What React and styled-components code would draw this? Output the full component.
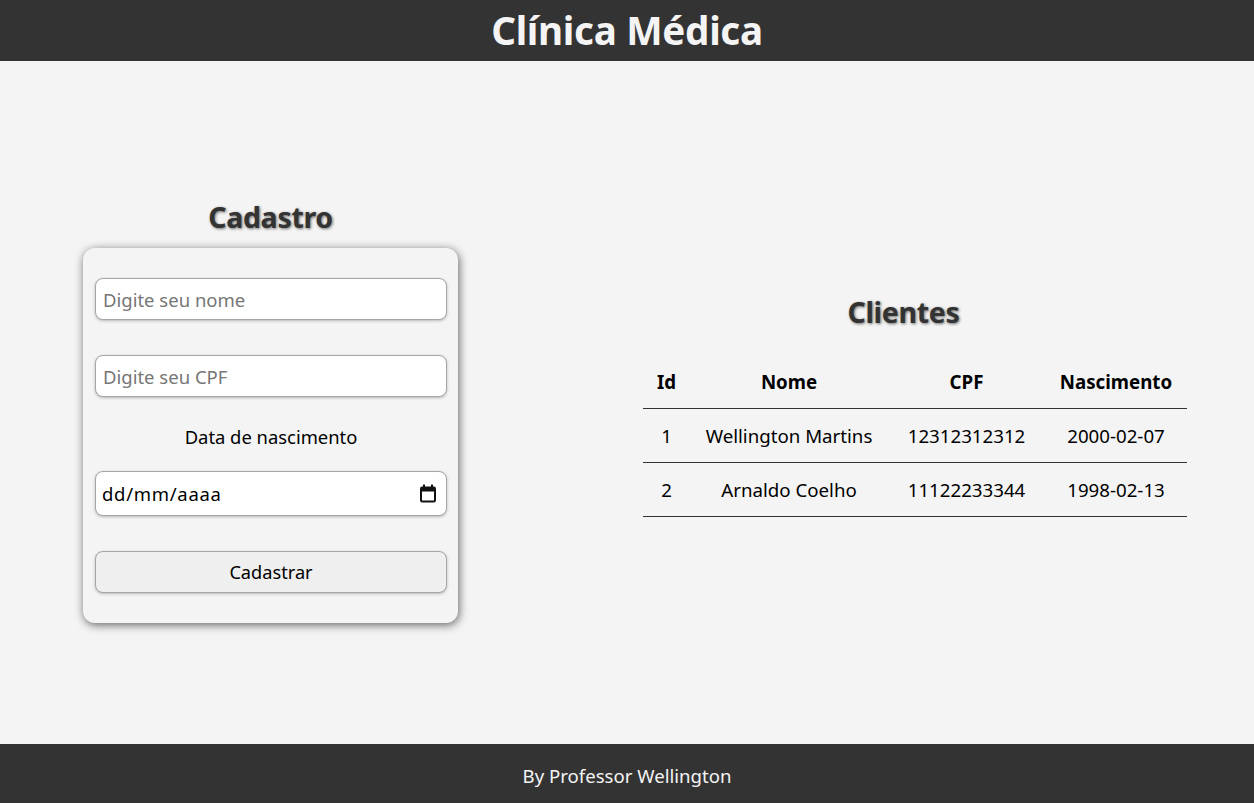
import React from "react";
import styled, { createGlobalStyle } from "styled-components";

const Global = createGlobalStyle`
  * { box-sizing: border-box; }
  html, body { margin: 0; padding: 0; }
  body {
    background: #f4f4f4;
    font-family: "Segoe UI", "Noto Sans", "Open Sans", sans-serif;
    color: #000;
  }
`;

const Page = styled.div`
  min-height: 100vh;
  display: flex;
  flex-direction: column;
`;

const Header = styled.header`
  height: 61px;
  background: #333333;
  display: flex;
  align-items: center;
  justify-content: center;
`;

const Title = styled.h1`
  margin: 0;
  color: #f4f4f4;
  font-size: 38.6px;
  font-weight: 700;
  line-height: 1;
  letter-spacing: -0.3px;
`;

const Main = styled.main`
  flex: 1;
  display: flex;
  align-items: center;
  padding-left: 83px;
`;

const Column = styled.section`
  display: flex;
  flex-direction: column;
  align-items: center;
  width: ${(p) => p.$width}px;
  margin-left: ${(p) => p.$offset || 0}px;
  margin-top: ${(p) => p.$top || 0}px;
`;

const Heading = styled.h2`
  margin: 0 ${(p) => p.$shift || 0}px ${(p) => p.$gap}px 0;
  font-size: 28.5px;
  line-height: 37px;
  font-weight: 700;
  color: #333333;
  text-shadow: 1px 1px 3px rgba(0, 0, 0, 0.55);
  letter-spacing: -0.3px;
`;

const Card = styled.form`
  width: 375px;
  padding: 30px 11px 30px 12px;
  background: #f4f4f4;
  border-radius: 12px;
  box-shadow: 1px 2px 10px rgba(0, 0, 0, 0.6);
  display: flex;
  flex-direction: column;
`;

const Field = styled.input`
  width: 100%;
  height: ${(p) => p.$h || 42}px;
  margin-bottom: ${(p) => p.$mb || 0}px;
  padding: 0 7px;
  border: 1px solid #a6a6a6;
  border-radius: 8px;
  background: #ffffff;
  box-shadow: 0 1px 3px rgba(0, 0, 0, 0.25);
  font-family: inherit;
  font-size: 18.5px;
  color: #000;
  outline: none;
  &::placeholder {
    color: #767676;
  }
`;

const DateWrap = styled.div`
  position: relative;
  margin-bottom: 35px;
`;

const DateField = styled(Field)`
  letter-spacing: 0.7px;
  font-size: 18.5px;
  padding-left: 6px;
  &::placeholder {
    color: #000;
  }
`;

const CalendarIcon = styled.svg`
  position: absolute;
  right: 10px;
  top: 13px;
  width: 18px;
  height: 19px;
  pointer-events: none;
`;

const Label = styled.label`
  display: block;
  text-align: center;
  font-size: 18.4px;
  line-height: 22px;
  margin-bottom: 23px;
`;

const Button = styled.button`
  width: 100%;
  height: 42px;
  border: 1px solid #a6a6a6;
  border-radius: 8px;
  background: #efefef;
  box-shadow: 0 1px 3px rgba(0, 0, 0, 0.25);
  font-family: inherit;
  font-size: 18.2px;
  color: #000;
  cursor: pointer;
`;

const Table = styled.table`
  width: 544px;
  border-collapse: collapse;
  font-size: 18.7px;
`;

const Th = styled.th`
  width: ${(p) => p.$w}px;
  height: 54px;
  padding: 0;
  text-align: center;
  font-weight: 700;
  border-bottom: 1px solid #333333;
`;

const Td = styled.td`
  height: 54px;
  padding: 0;
  text-align: center;
  border-bottom: 1px solid #333333;
`;

const Footer = styled.footer`
  height: 59px;
  background: #333333;
  color: #f4f4f4;
  display: flex;
  align-items: center;
  justify-content: center;
  font-size: 18.6px;
  padding-top: 4px;
`;

const clientes = [
  { id: 1, nome: "Wellington Martins", cpf: "12312312312", nasc: "2000-02-07" },
  { id: 2, nome: "Arnaldo Coelho", cpf: "11122233344", nasc: "1998-02-13" },
];

export default function App() {
  return (
    <Page>
      <Global />
      <Header>
        <Title>Clínica Médica</Title>
      </Header>
      <Main>
        <Column $width={375} $top={17}>
          <Heading $gap={12}>Cadastro</Heading>
          <Card onSubmit={(e) => e.preventDefault()}>
            <Field placeholder="Digite seu nome" $mb={35} />
            <Field placeholder="Digite seu CPF" $mb={29} />
            <Label>Data de nascimento</Label>
            <DateWrap>
              <DateField placeholder="dd/mm/aaaa" $h={45} />
              <CalendarIcon viewBox="0 0 18 19" fill="none">
                <rect x="2" y="3.5" width="14" height="14" rx="1.2" stroke="#111" strokeWidth="2" />
                <rect x="2" y="3.5" width="14" height="4" fill="#111" />
                <rect x="4" y="0.5" width="2" height="4" fill="#111" />
                <rect x="12" y="0.5" width="2" height="4" fill="#111" />
              </CalendarIcon>
            </DateWrap>
            <Button type="submit">Cadastrar</Button>
          </Card>
        </Column>
        <Column $width={544} $offset={185} $top={6}>
          <Heading $gap={23} $shift={23}>Clientes</Heading>
          <Table>
            <thead>
              <tr>
                <Th $w={47}>Id</Th>
                <Th $w={198}>Nome</Th>
                <Th $w={157}>CPF</Th>
                <Th $w={142}>Nascimento</Th>
              </tr>
            </thead>
            <tbody>
              {clientes.map((c) => (
                <tr key={c.id}>
                  <Td>{c.id}</Td>
                  <Td>{c.nome}</Td>
                  <Td>{c.cpf}</Td>
                  <Td>{c.nasc}</Td>
                </tr>
              ))}
            </tbody>
          </Table>
        </Column>
      </Main>
      <Footer>By Professor Wellington</Footer>
    </Page>
  );
}
